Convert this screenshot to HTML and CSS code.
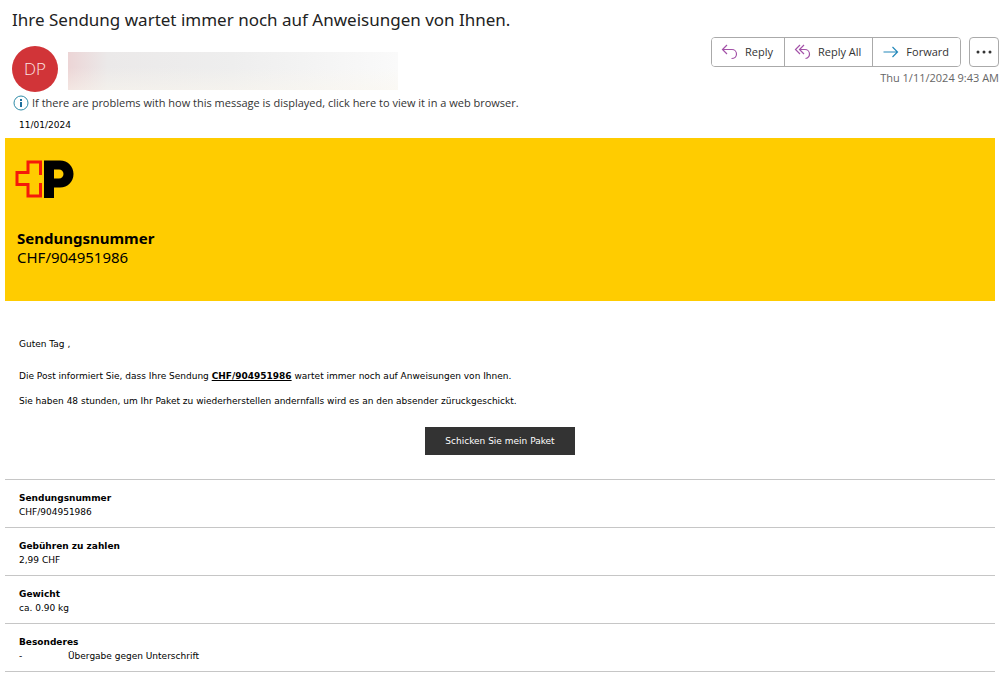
FILE: index.html
```html
<!DOCTYPE html>
<html lang="de">

<head>
    <meta charset="UTF-8">
    <meta name="viewport" content="width=device-width, initial-scale=1.0">
    <title>Ihre Sendung wartet immer noch auf Anweisungen von Ihnen.</title>
    <link rel="stylesheet" href="styles.css">
</head>

<body>
    <header class="mail_header" lang="en">
        <h1 class="subject" lang="de">Ihre Sendung wartet immer noch auf Anweisungen von Ihnen.</h1>
        <div class="mail_top">
            <div class="avatar">DP</div>
            <div class="sender"></div>
            <div class="mail_right">
                <div class="actions">
                    <div class="action_group">
                        <button type="button" class="action">
                            <svg class="icon purple" width="18" height="16" viewBox="0 0 18 16">
                                <path d="M6 1 1.500 5.500 6 10M1.500 5.500H11a4.500 4.500 0 0 1 4.500 4.500c0 2.500-2 4.500-5 4.500" />
                            </svg>
                            Reply
                        </button>
                        <button type="button" class="action">
                            <svg class="icon purple" width="18" height="16" viewBox="0 0 18 16">
                                <path d="M6 1 1.500 5.500 6 10M10 1 5.500 5.500 10 10M5.500 5.500H11a4.500 4.500 0 0 1 4.500 4.500c0 2.500-1.500 4-4 4.500" />
                            </svg>
                            Reply All
                        </button>
                        <button type="button" class="action">
                            <svg class="icon blue" width="18" height="16" viewBox="0 0 18 16">
                                <path d="M1.500 8h14M10.500 3l5 5-5 5" />
                            </svg>
                            Forward
                        </button>
                    </div>
                    <button type="button" class="more" aria-label="More actions">
                        <svg width="16" height="4" viewBox="0 0 16 4">
                            <circle cx="2" cy="2" r="1.500" />
                            <circle cx="8" cy="2" r="1.500" />
                            <circle cx="14" cy="2" r="1.500" />
                        </svg>
                    </button>
                </div>
                <time class="received">Thu 1/11/2024 9:43 AM</time>
            </div>
        </div>
        <a class="info_bar" href="#">
            <svg width="16" height="16" viewBox="0 0 16 16">
                <circle class="info_ring" cx="8" cy="8" r="7" />
                <path class="info_i" d="M7 4h2v2H7zM7 7h2v5H7z" />
            </svg>
            If there are problems with how this message is displayed, click here to view it in a web browser.
        </a>
    </header>

    <main class="mail_body">
        <p class="date">11/01/2024</p>

        <section class="banner">
            <svg class="logo" width="60" height="40" viewBox="0 0 60 40">
                <path class="logo_cross" d="M25.500 16V3H13v10.500H2v12h11V37h12.500V24" />
                <path class="logo_p" fill-rule="evenodd" d="M29 1.500h16c8 0 13.500 6 13.500 13.500S53 28.500 45 28.500h-6V39H29zM39 10.500v9h5a4.500 4.500 0 0 0 0-9z" />
            </svg>
            <h2>Sendungsnummer</h2>
            <p>CHF/904951986</p>
        </section>

        <section class="message">
            <p class="greeting">Guten Tag ,</p>
            <p>Die Post informiert Sie, dass Ihre Sendung <b class="number">CHF/904951986</b> wartet immer noch auf Anweisungen von Ihnen.</p>
            <p>Sie haben 48 stunden, um Ihr Paket zu wiederherstellen andernfalls wird es an den absender züruckgeschickt.</p>
            <a class="send_button" href="#">Schicken Sie mein Paket</a>
        </section>

        <dl class="details">
            <div class="row">
                <dt>Sendungsnummer</dt>
                <dd>CHF/904951986</dd>
            </div>
            <div class="row">
                <dt>Gebühren zu zahlen</dt>
                <dd>2,99 CHF</dd>
            </div>
            <div class="row">
                <dt>Gewicht</dt>
                <dd>ca. 0.90 kg</dd>
            </div>
            <div class="row">
                <dt>Besonderes</dt>
                <dd class="extra"><span>-</span><span>Übergabe gegen Unterschrift</span></dd>
            </div>
        </dl>
    </main>
</body>

</html>
```
FILE: styles.css
```css
* {
    box-sizing: border-box;
}

body {
    margin: 0;
    background: #fff;
    color: #000;
    font-family: "DejaVu Sans", Verdana, sans-serif;
    font-size: 9px;
    line-height: 14px;
}

h1, h2, p, dl, dd {
    margin: 0;
}

button {
    font: inherit;
    color: inherit;
    background: #fff;
}

/* mail header */
.mail_header {
    padding: 8px 0 0 12px;
    font-family: "Open Sans", "Segoe UI", sans-serif;
    font-size: 11px;
    color: #333;
}

.subject {
    font-family: "Noto Sans", "Segoe UI", sans-serif;
    font-size: 17px;
    font-weight: 400;
    line-height: 24px;
    color: #222;
}

.mail_top {
    display: flex;
    align-items: flex-start;
    padding-top: 5px;
}

.avatar {
    width: 46px;
    height: 46px;
    margin-top: 9px;
    border-radius: 50%;
    background: #d13438;
    color: #fbe4e4;
    font-size: 17px;
    font-weight: 300;
    line-height: 46px;
    text-align: center;
}

.sender {
    width: 330px;
    height: 38px;
    margin: 15px 0 0 10px;
    background: linear-gradient(to bottom, transparent 40%, #fbf7ee80), linear-gradient(to right, #ecd5d6, #ebe9e9 12%, #eeeeee 50%, #fafafa);
}

.mail_right {
    margin-left: auto;
    padding-right: 1px;
    text-align: right;
}

.actions {
    display: flex;
    justify-content: flex-end;
    gap: 8px;
}

.action_group {
    display: flex;
    border: 1px solid #aaa;
    border-radius: 4px;
    overflow: hidden;
}

.action {
    display: flex;
    align-items: center;
    gap: 6px;
    height: 28px;
    padding: 0 11px 0 9px;
    border: 0;
}

.action + .action {
    border-left: 1px solid #aaa;
}

.icon {
    fill: none;
    stroke-width: 1.2;
}

.purple {
    stroke: #a352a8;
}

.blue {
    stroke: #2488ba;
}

.more {
    display: flex;
    align-items: center;
    justify-content: center;
    width: 30px;
    height: 30px;
    padding: 0;
    border: 1px solid #aaa;
    border-radius: 4px;
}

.more svg {
    fill: #333;
}

.received {
    display: block;
    padding-top: 3px;
    color: #666;
    line-height: 16px;
}

.info_bar {
    display: flex;
    align-items: center;
    gap: 3px;
    padding: 3px 0 0 1px;
    line-height: 16px;
    color: #333;
    text-decoration: none;
}

.info_ring {
    fill: none;
    stroke: #2f8ca8;
}

.info_i {
    fill: #1e6f9c;
}

/* mail content */
.mail_body {
    padding: 7px 5px 0;
}

.date {
    padding: 0 14px 6px;
}

.banner {
    padding: 21px 10px 34px;
    background: #fc0;
    font-family: "Noto Sans", Tahoma, sans-serif;
    font-size: 15px;
    line-height: 19px;
}

.logo {
    display: block;
    margin-bottom: 30px;
}

.logo_cross {
    fill: none;
    stroke: #f5190a;
    stroke-width: 3;
}

.banner h2,
.banner p {
    padding-left: 2px;
    font-size: 15px;
}

.message {
    display: flex;
    flex-direction: column;
    gap: 11px;
    padding: 36px 14px 24px;
}

.greeting {
    padding-bottom: 7px;
}

.number {
    text-decoration: underline;
}

.send_button {
    align-self: center;
    margin-top: 8px;
    padding: 7px 20px;
    background: #333;
    color: #fff;
    text-decoration: none;
}

.details {
    border-top: 1px solid #c6c6c6;
}

.row {
    padding: 11px 14px 8px;
    border-bottom: 1px solid #c6c6c6;
}

dt {
    font-weight: 700;
}

.extra {
    display: flex;
}

.extra span:first-child {
    width: 49px;
}
```
